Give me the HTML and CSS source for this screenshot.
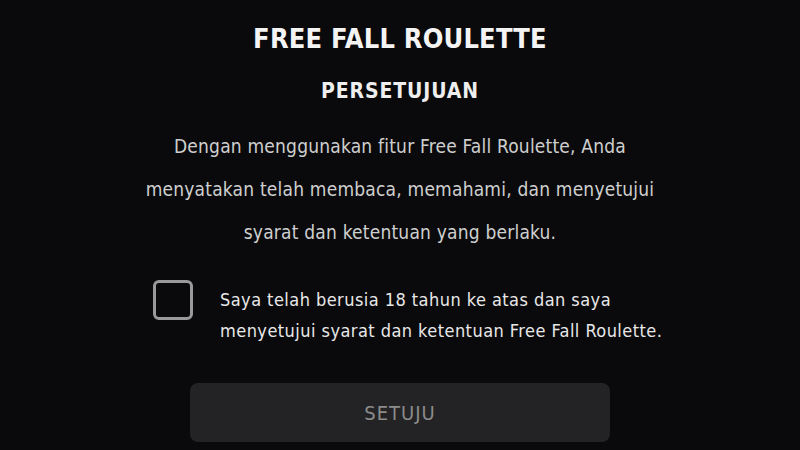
FILE: index.html
```html
<!DOCTYPE html>
<html>
<head>
<meta charset="utf-8">
<link rel="stylesheet" href="styles.css">
</head>
<body>
<main class="page">
  <h1 class="title">FREE FALL ROULETTE</h1>
  <h2 class="subtitle">PERSETUJUAN</h2>
  <p class="desc">Dengan menggunakan fitur Free Fall Roulette, Anda<br>menyatakan telah membaca, memahami, dan menyetujui<br>syarat dan ketentuan yang berlaku.</p>
  <label class="agree">
    <span class="box"></span>
    <span class="agree-text">Saya telah berusia 18 tahun ke atas dan saya<br>menyetujui syarat dan ketentuan Free Fall Roulette.</span>
  </label>
  <button class="btn">SETUJU</button>
</main>
</body>
</html>
```
FILE: styles.css
```css
html, body {
  margin: 0;
  padding: 0;
  background: #0a0a0c;
}
body {
  width: 800px;
  height: 450px;
  overflow: hidden;
  font-family: "DejaVu Sans Condensed", "DejaVu Sans", sans-serif;
}
.page {
  display: flex;
  flex-direction: column;
  align-items: center;
  padding-top: 21px;
}
.title {
  margin: 0;
  font-size: 27px;
  line-height: 36px;
  font-weight: bold;
  color: #f4f4f4;
  letter-spacing: 0.2px;
}
.subtitle {
  margin: 20px 0 0;
  font-size: 21px;
  line-height: 28px;
  font-weight: 600;
  color: #eeeeee;
  letter-spacing: 0.9px;
}
.desc {
  margin: 20px 0 0;
  font-size: 19px;
  line-height: 43px;
  color: #cfcfcf;
  text-align: center;
  letter-spacing: 0.2px;
}
.agree {
  margin-top: 26px;
  margin-left: 14px;
  display: flex;
  align-items: flex-start;
  gap: 27px;
  width: 508px;
}
.box {
  flex: none;
  width: 34px;
  height: 34px;
  border: 3px solid #9a9a9a;
  border-radius: 6px;
}
.agree-text {
  font-size: 18px;
  line-height: 31px;
  color: #e8e8e8;
  margin-top: 4px;
  letter-spacing: 0.45px;
  white-space: nowrap;
}
.btn {
  margin-top: 37px;
  width: 420px;
  height: 59px;
  border: none;
  border-radius: 8px;
  background: #232325;
  color: #8c8c8c;
  font-family: inherit;
  font-size: 20px;
  font-weight: normal;
  letter-spacing: 1px;
}
```
